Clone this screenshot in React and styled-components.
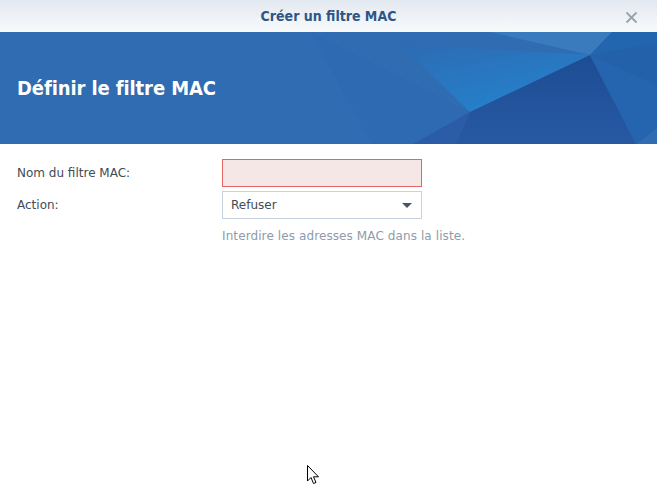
import React from "react";
import styled, { createGlobalStyle } from "styled-components";

const GlobalStyle = createGlobalStyle`
  html, body {
    margin: 0;
    padding: 0;
    background: #ffffff;
  }
  body {
    font-family: "DejaVu Sans", Verdana, sans-serif;
  }
`;

const Window = styled.div`
  position: relative;
  width: 657px;
  height: 499px;
  background: #ffffff;
  overflow: hidden;
`;

const TitleBar = styled.div`
  height: 32px;
  display: flex;
  align-items: center;
  justify-content: center;
  position: relative;
  background: linear-gradient(#e3e9f0, #f8fafc);
`;

const TitleText = styled.div`
  font-family: "DejaVu Sans Condensed", "DejaVu Sans", sans-serif;
  font-weight: bold;
  font-size: 14px;
  color: #2d5588;
`;

const Close = styled.div`
  position: absolute;
  right: 19px;
  top: 9px;
  width: 13px;
  height: 13px;
`;

const Banner = styled.div`
  position: relative;
  height: 112px;
  background: #2f6cb2;
  display: flex;
  align-items: center;
  padding-left: 17px;
  overflow: hidden;
`;

const BannerArt = styled.svg`
  position: absolute;
  left: 0;
  top: 0;
`;

const Heading = styled.h1`
  position: relative;
  margin: 0;
  font-family: "DejaVu Sans Condensed", "DejaVu Sans", sans-serif;
  font-weight: bold;
  font-size: 20px;
  color: #ffffff;
  letter-spacing: -0.1px;
`;

const Form = styled.div`
  display: grid;
  grid-template-columns: 205px 200px;
  row-gap: 4px;
  padding: 15px 0 0 17px;
`;

const Label = styled.div`
  font-size: 12px;
  color: #414b55;
  display: flex;
  align-items: center;
  height: 28px;
`;

const TextInput = styled.div`
  box-sizing: border-box;
  height: 28px;
  background: #f6e7e7;
  border: 1px solid #e26464;
`;

const Select = styled.div`
  box-sizing: border-box;
  height: 28px;
  border: 1px solid #c7d2de;
  background: #ffffff;
  display: flex;
  align-items: center;
  justify-content: space-between;
  padding: 0 9px 0 8px;
  font-size: 12px;
  color: #414b55;
`;

const Caret = styled.div`
  width: 0;
  height: 0;
  border-left: 5px solid transparent;
  border-right: 5px solid transparent;
  border-top: 5px solid #4a5560;
`;

const Hint = styled.div`
  grid-column: 2 / span 1;
  white-space: nowrap;
  font-size: 12px;
  color: #8d9cac;
  padding-top: 6px;
  letter-spacing: 0.1px;
`;

const Pointer = styled.svg`
  position: absolute;
  left: 307px;
  top: 465px;
`;

export default function App() {
  return (
    <Window>
      <GlobalStyle />
      <TitleBar>
        <TitleText>Créer un filtre MAC</TitleText>
        <Close>
          <svg width="13" height="13" viewBox="0 0 13 13">
            <path d="M1.5 1.5 L11.5 11.5 M11.5 1.5 L1.5 11.5" stroke="#9aa2ab" strokeWidth="1.8" />
          </svg>
        </Close>
      </TitleBar>
      <Banner>
        <BannerArt width="657" height="112" viewBox="0 32 657 112">
          <defs>
            <linearGradient id="glow" x1="0" y1="0" x2="0.6" y2="1">
              <stop offset="0" stopColor="#2d6bb3" />
              <stop offset="1" stopColor="#2482cc" />
            </linearGradient>
            <linearGradient id="dark" x1="0.5" y1="0" x2="0.5" y2="1">
              <stop offset="0" stopColor="#1d4d93" />
              <stop offset="1" stopColor="#2759a3" />
            </linearGradient>
          </defs>
          <polygon points="310,32 470,112 413,144 372,144" fill="#2e6ab1" />
          <polygon points="400,44 590,55 470,112" fill="url(#glow)" />
          <polygon points="490,32 612,32 590,55" fill="#3a7bbd" />
          <polygon points="612,32 657,32 657,42 590,55" fill="#2266b0" />
          <polygon points="590,55 470,112 455,144 636,144" fill="url(#dark)" />
          <polygon points="590,55 657,42 657,128 636,144" fill="#2461ab" />
          <polygon points="470,112 413,144 455,144" fill="#2b5da6" />
          <polygon points="590,55 657,85 657,128 636,144" fill="#2766b0" opacity="0.6" />
        </BannerArt>
        <Heading>Définir le filtre MAC</Heading>
      </Banner>
      <Form>
        <Label>Nom du filtre MAC:</Label>
        <TextInput />
        <Label>Action:</Label>
        <Select>
          Refuser
          <Caret />
        </Select>
        <Hint>Interdire les adresses MAC dans la liste.</Hint>
      </Form>
      <Pointer width="13" height="20" viewBox="0 0 13 20">
        <path d="M0.5 0.5 L0.5 16 L4 12.5 L6.5 18.5 L9 17.5 L6.5 11.8 L11.5 11.8 Z" fill="#ffffff" stroke="#000000" strokeWidth="1" />
      </Pointer>
    </Window>
  );
}
